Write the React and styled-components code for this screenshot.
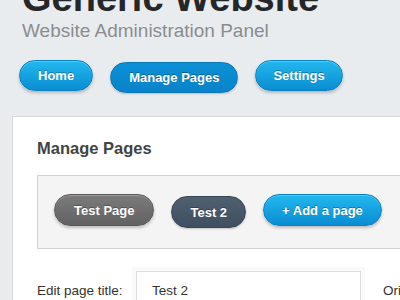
import React from "react";
import styled, { createGlobalStyle, css } from "styled-components";

const GlobalStyle = createGlobalStyle`
	html, body {
		margin: 0;
		padding: 0;
		background: #e9ecef;
		overflow: hidden;
		font-family: "Liberation Sans", Arial, sans-serif;
	}
`;

const blue = css`
	background: linear-gradient(#22b8ee, #0a8dd2);
	border: 1px solid #0a80c2;
`;

const Page = styled.div`
	width: 400px;
	height: 300px;
	overflow: hidden;
`;

const Header = styled.header`
	padding: 0 22px;
`;

const Title = styled.h1`
	margin: -22px 0 0;
	font-size: 38px;
	line-height: 40px;
	font-weight: bold;
	color: #252628;
	white-space: nowrap;
`;

const Subtitle = styled.p`
	margin: 2px 0 0;
	font-size: 19px;
	line-height: 22px;
	color: #8a8c8f;
	white-space: nowrap;
`;

const Nav = styled.nav`
	display: flex;
	align-items: flex-start;
	gap: 17px;
	margin-top: 18px;
	padding-left: 19px;
`;

const Pill = styled.button`
	height: ${(p) => p.$h || 31}px;
	padding: 0 ${(p) => p.$pad || 18}px;
	margin-top: ${(p) => (p.$active ? 2 : 0)}px;
	border-radius: 16px;
	font-family: "Liberation Sans", Arial, sans-serif;
	font-size: 13px;
	font-weight: bold;
	color: #fff;
	text-shadow: 0 -1px 0 rgba(0, 0, 0, 0.3);
	box-shadow: 0 2px 3px rgba(0, 0, 0, 0.22), inset 0 1px 0 rgba(255, 255, 255, 0.25);
	white-space: nowrap;
	cursor: pointer;
	${blue}
	${(p) =>
		p.$active &&
		css`
			background: linear-gradient(#0c90d6, #0983c9);
			border-color: #0877b8;
			box-shadow: 0 1px 2px rgba(0, 0, 0, 0.2);
		`}
`;

const TabPill = styled(Pill)`
	height: 32px;
	font-size: 13px;
	${(p) =>
		p.$tone === "gray" &&
		css`
			background: linear-gradient(#7b7b7b, #626262);
			border-color: #585858;
		`}
	${(p) =>
		p.$tone === "slate" &&
		css`
			background: linear-gradient(#4f6072, #3f4f60);
			border-color: #384756;
			box-shadow: 0 1px 2px rgba(0, 0, 0, 0.2);
		`}
`;

const Card = styled.section`
	margin: 23px 0 0 12px;
	background: #fff;
	border: 1px solid #d6d9dc;
	border-right: none;
	padding: 21px 0 40px 24px;
`;

const Heading = styled.h2`
	margin: 0;
	font-size: 16.5px;
	line-height: 20px;
	font-weight: bold;
	color: #414345;
`;

const TabBox = styled.div`
	display: flex;
	align-items: flex-start;
	gap: 17px;
	margin-top: 17px;
	padding: 18px 16px 20px;
	background: #f4f4f4;
	border: 1px solid #d2d2d2;
	border-right: none;
`;

const FormRow = styled.div`
	display: flex;
	align-items: center;
	margin-top: 22px;
	white-space: nowrap;
`;

const Label = styled.label`
	width: 99px;
	flex: none;
	font-size: 13.5px;
	color: #333;
`;

const Input = styled.input`
	box-sizing: border-box;
	width: 225px;
	height: 38px;
	flex: none;
	padding: 0 15px;
	border: 1px solid #dcdcdc;
	box-shadow: 0 0 0 4px rgba(0, 0, 0, 0.025);
	font-family: "Liberation Sans", Arial, sans-serif;
	font-size: 13.5px;
	color: #333;
	outline: none;
`;

const Aside = styled.span`
	margin-left: 22px;
	font-size: 13.5px;
	color: #333;
`;

export default function App() {
	return (
		<Page>
			<GlobalStyle />
			<Header>
				<Title>Generic Website</Title>
				<Subtitle>Website Administration Panel</Subtitle>
			</Header>
			<Nav>
				<Pill $pad={18}>Home</Pill>
				<Pill $active $pad={18}>Manage Pages</Pill>
				<Pill $pad={17}>Settings</Pill>
			</Nav>
			<Card>
				<Heading>Manage Pages</Heading>
				<TabBox>
					<TabPill $tone="gray" $pad={19}>Test Page</TabPill>
					<TabPill $tone="slate" $active>Test 2</TabPill>
					<TabPill>+ Add a page</TabPill>
				</TabBox>
				<FormRow>
					<Label>Edit page title:</Label>
					<Input defaultValue="Test 2" />
					<Aside>Original title:</Aside>
				</FormRow>
			</Card>
		</Page>
	);
}
